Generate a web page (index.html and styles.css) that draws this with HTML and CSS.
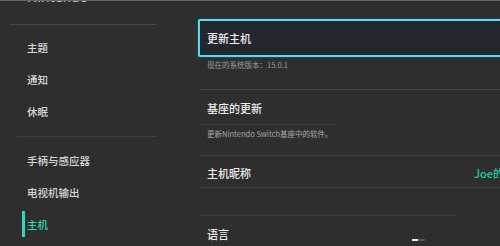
FILE: index.html
```html
<!DOCTYPE html>
<html lang="zh-CN">
<head>
<meta charset="utf-8">
<title>主机设置</title>
<link rel="stylesheet" href="styles.css">
</head>
<body>
<div class="screen">
  <aside class="sidebar">
    <div class="brand"><span>Nintendo</span></div>
    <div class="sep sep-top"></div>
    <ul class="menu">
      <li class="menu-item">主题</li>
      <li class="menu-item">通知</li>
      <li class="menu-item">休眠</li>
    </ul>
    <div class="sep sep-mid"></div>
    <ul class="menu menu-second">
      <li class="menu-item">手柄与感应器</li>
      <li class="menu-item">电视机输出</li>
      <li class="menu-item active">主机</li>
    </ul>
  </aside>
  <main class="content">
    <div class="selected"><span class="title">更新主机</span></div>
    <div class="note">现在的系统版本：15.0.1</div>
    <div class="divider d1"></div>
    <div class="title row-title t-dock">基座的更新</div>
    <div class="divider faint"></div>
    <div class="note desc">更新Nintendo Switch基座中的软件。</div>
    <div class="divider d2"></div>
    <div class="row-pair">
      <span class="title">主机昵称</span>
      <span class="value">Joe的Switch</span>
    </div>
    <div class="divider"></div>
    <div class="spacer"></div>
    <div class="divider short"></div>
    <div class="title row-title t-lang">语言</div>
    <div class="scroll-thumb"></div>
  </main>
</div>
</body>
</html>
```

FILE: styles.css
```css
* { box-sizing: border-box; }
html, body {
  margin: 0;
  padding: 0;
  width: 500px;
  height: 246px;
  overflow: hidden;
  background: #2e2e2e;
  font-family: "Noto Sans CJK SC", "Noto Sans", sans-serif;
}
.screen {
  display: flex;
  width: 500px;
  height: 246px;
  overflow: hidden;
  border-top: 1px solid #666;
  background: #2e2e2e;
}
.sidebar {
  width: 170px;
  flex: none;
}
.brand {
  height: 23px;
  padding-left: 27px;
  overflow: hidden;
}
.brand span {
  display: block;
  margin-top: -12px;
  font-size: 14px;
  line-height: 16px;
  color: #cfcfcf;
  font-family: "Open Sans", sans-serif;
}
.sep {
  height: 1px;
  background: #474747;
}
.sep-top { margin: 0 13px 0 10px; }
.sep-mid { margin: 9px 13px 0 17px; background: #3f3f3f; }
.menu {
  list-style: none;
  margin: 0;
  padding: 6px 0 0 0;
}
.menu-second { padding-top: 7px; }
.menu-item {
  display: flex;
  align-items: center;
  height: 32px;
  padding-left: 22px;
  font-size: 10.5px;
  color: #d6d6d6;
  font-weight: 500;
}
.menu-item::before {
  content: "";
  width: 2.5px;
  height: 26px;
  margin-right: 2.5px;
  background: transparent;
}
.menu-item.active { color: #2fd3b2; }
.menu-item.active::before { background: #2fd8b8; }

.content {
  position: relative;
  flex: 1;
  padding-left: 30px;
  min-width: 0;
}
.title {
  font-size: 11px;
  color: #ececec;
  font-weight: 500;
}
.selected {
  display: flex;
  align-items: center;
  margin-top: 18px;
  margin-left: -2px;
  margin-right: -30px;
  height: 38px;
  padding-left: 7px;
  background: #23262c;
  border: 2px solid #5fd7ea;
  box-shadow: 0 0 0 1px #1d4650;
  border-radius: 2px;
}
.note {
  margin-top: 3px;
  padding-left: 7px;
  font-size: 7.5px;
  line-height: 10px;
  color: #9c9c9c;
}
.divider {
  height: 1px;
  background: #444;
}
.d1 { margin-top: 19px; }
.row-title {
  padding-left: 7px;
  line-height: 16px;
}
.t-dock { margin-top: 10px; }
.faint {
  margin-top: 8px;
  width: 135px;
  background: #3a3a3a;
}
.desc { margin-top: 4px; color: #a8a8a8; }
.d2 { margin-top: 16px; }
.row-pair {
  display: grid;
  grid-template-columns: 267px auto;
  align-items: center;
  height: 31px;
  padding-left: 7px;
  padding-top: 2px;
  white-space: nowrap;
  overflow: hidden;
}
.value {
  font-size: 11px;
  color: #1fc9a5;
  font-weight: 500;
}
.spacer { height: 27px; }
.short { width: 257px; background: #3d3d3d; }
.t-lang { margin-top: 10px; }
.scroll-thumb {
  position: absolute;
  left: 242px;
  top: 238px;
  width: 13px;
  height: 2px;
  background: linear-gradient(to right, #eee 0 6px, #555 6px);
}
```
